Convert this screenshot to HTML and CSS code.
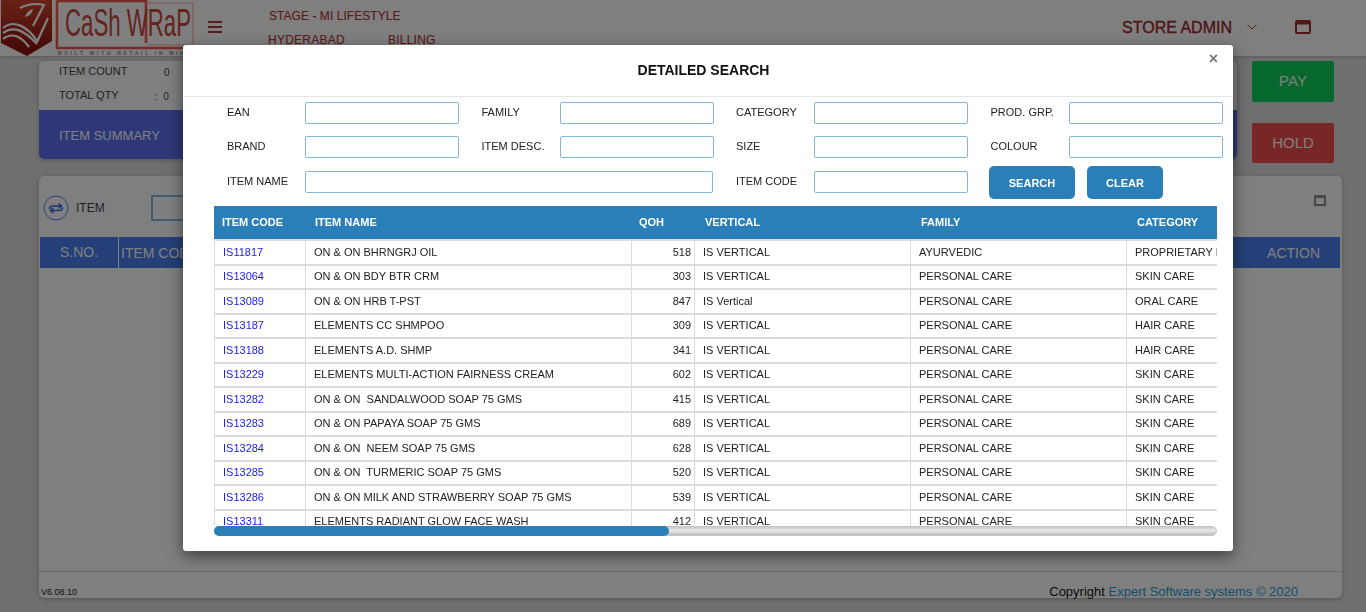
FILE: index.html
```html
<!DOCTYPE html>
<html lang="en">
<head>
<meta charset="utf-8">
<title>Cash Wrap - Billing</title>
<link rel="stylesheet" href="styles.css">
</head>
<body>
<div class="app">
  <header class="topbar">
    <svg class="logo" width="200" height="56" viewBox="0 0 200 56" aria-label="Cash Wrap">
      <defs>
        <linearGradient id="shield" x1="0" y1="0" x2="0" y2="1">
          <stop offset="0" stop-color="#d0452a"/>
          <stop offset="1" stop-color="#860e0c"/>
        </linearGradient>
      </defs>
      <path d="M1 0H52V41L27 56L1 43Z" fill="url(#shield)"/>
      <path d="M3 28C14 19 27 26 38 42M3 33C14 25 25 31 37 44M3 39C12 32 21 36 29 47" fill="none" stroke="#fff" stroke-width="2.200"/>
      <path d="M20 8C28 4 36 3 44 5L33 26M48 18L37 42" fill="none" stroke="#fff" stroke-width="2.200"/>
      <path d="M25 17C26 13 29 10 33 9C32 13 30 16 25 17Z" fill="#fff"/>
      <path d="M56.500 1H146V15M146 11V43M57 1V48H186" fill="none" stroke="#f0584a" stroke-width="2.600"/>
      <path d="M146 3H193V45H147" fill="none" stroke="#f4a8a0" stroke-width="1"/>
      <text class="logo-name" x="65" y="36" textLength="126" lengthAdjust="spacingAndGlyphs">CaSh WRaP</text>
      <text class="logo-tag" x="58" y="55" textLength="132" lengthAdjust="spacing">BUILT WITH RETAIL IN MIND</text>
    </svg>
    <svg class="burger" width="14" height="12" viewBox="0 0 14 12"><path d="M0 1H14M0 6H14M0 11H14" stroke="#b03838" stroke-width="1.800"/></svg>
    <div class="store">
      <div class="store-name">STAGE - MI LIFESTYLE</div>
      <div class="store-sub"><span>HYDERABAD</span><span>BILLING</span></div>
    </div>
    <div class="user">
      <span class="user-name">STORE ADMIN</span>
      <svg class="chev" width="10" height="6" viewBox="0 0 10 6"><path d="M.5 .5L5 5L9.500 .5" fill="none" stroke="#a84038" stroke-width="1"/></svg>
      <svg class="win" width="16" height="14" viewBox="0 0 16 14"><rect x="1" y="1" width="14" height="12" rx="1" fill="none" stroke="#a82c28" stroke-width="2"/><rect x="1" y="1" width="14" height="3.500" fill="#a82c28"/></svg>
    </div>
  </header>

  <main class="content">
    <div class="summary-row">
      <section class="summary-card">
        <div class="stats">
          <div class="stat"><span class="stat-label">ITEM COUNT</span><span class="stat-val">0</span></div>
          <div class="stat"><span class="stat-label">TOTAL QTY</span><span class="stat-val">:&nbsp;&nbsp;0</span></div>
        </div>
        <div class="summary-band">ITEM SUMMARY</div>
      </section>
      <div class="actions">
        <button class="action pay">PAY</button>
        <button class="action hold">HOLD</button>
      </div>
    </div>

    <section class="bill-card">
      <div class="bill-tools">
        <svg class="swap" width="26" height="26" viewBox="0 0 26 26"><circle cx="13" cy="13" r="12" fill="none" stroke="#5080e8" stroke-width="1"/><path d="M6.500 14C6.500 11.500 8 11 10 11H18M15.500 8.500L18.500 11L15.500 13.500M19.500 12.500C19.500 15 18 15.500 16 15.500H8M10.500 13L7.500 15.500L10.500 18" fill="none" stroke="#3a6ae8" stroke-width="1.600"/></svg>
        <span class="bill-label">ITEM</span>
        <input class="bill-input" type="text">
        <svg class="bill-win" width="12" height="11" viewBox="0 0 12 11"><rect x="1" y="1" width="10" height="9" fill="#fff" stroke="#909090" stroke-width="2"/><rect x="0" y="0" width="12" height="3" fill="#909090"/></svg>
      </div>
      <div class="bill-head"><span class="h-sno">S.NO.</span><span class="h-code">ITEM CODE</span><span class="h-action">ACTION</span></div>
      <div class="bill-body"></div>
      <footer class="bill-foot"><span class="version">V6.08.10</span><span class="copy">Copyright <span class="copy-link">Expert Software systems © 2020</span></span></footer>
    </section>
  </main>
</div>

<div class="backdrop"></div>

<div class="modal">
  <div class="modal-head">
    <h4 class="modal-title">DETAILED SEARCH</h4>
    <span class="modal-close">×</span>
  </div>
  <form class="search">
    <div class="frow">
      <label class="field"><span>EAN</span><input type="text"></label>
      <label class="field"><span>FAMILY</span><input type="text"></label>
      <label class="field"><span>CATEGORY</span><input type="text"></label>
      <label class="field"><span>PROD. GRP.</span><input type="text"></label>
    </div>
    <div class="frow">
      <label class="field"><span>BRAND</span><input type="text"></label>
      <label class="field"><span>ITEM DESC.</span><input type="text"></label>
      <label class="field"><span>SIZE</span><input type="text"></label>
      <label class="field"><span>COLOUR</span><input type="text"></label>
    </div>
    <div class="frow frow-last">
      <label class="field field-wide"><span>ITEM NAME</span><input type="text"></label>
      <label class="field"><span>ITEM CODE</span><input type="text"></label>
      <div class="btns"><button type="button" class="btn btn-search">SEARCH</button><button type="button" class="btn btn-clear">CLEAR</button></div>
    </div>
  </form>
  <div class="grid-wrap">
    <div class="grid-scroll">
      <table class="grid">
        <colgroup><col class="c1"><col class="c2"><col class="c3"><col class="c4"><col class="c5"><col class="c6"></colgroup>
        <thead><tr><th>ITEM CODE</th><th class="th-name">ITEM NAME</th><th class="th-qoh">QOH</th><th>VERTICAL</th><th>FAMILY</th><th>CATEGORY</th></tr></thead>
        <tbody>
          <tr><td><a>IS11817</a></td><td>ON &amp; ON BHRNGRJ OIL</td><td class="n">518</td><td>IS VERTICAL</td><td>AYURVEDIC</td><td>PROPRIETARY MEDICINE</td></tr>
          <tr><td><a>IS13064</a></td><td>ON &amp; ON BDY BTR CRM</td><td class="n">303</td><td>IS VERTICAL</td><td>PERSONAL CARE</td><td>SKIN CARE</td></tr>
          <tr><td><a>IS13089</a></td><td>ON &amp; ON HRB T-PST</td><td class="n">847</td><td>IS Vertical</td><td>PERSONAL CARE</td><td>ORAL CARE</td></tr>
          <tr><td><a>IS13187</a></td><td>ELEMENTS CC SHMPOO</td><td class="n">309</td><td>IS VERTICAL</td><td>PERSONAL CARE</td><td>HAIR CARE</td></tr>
          <tr><td><a>IS13188</a></td><td>ELEMENTS A.D. SHMP</td><td class="n">341</td><td>IS VERTICAL</td><td>PERSONAL CARE</td><td>HAIR CARE</td></tr>
          <tr><td><a>IS13229</a></td><td>ELEMENTS MULTI-ACTION FAIRNESS CREAM</td><td class="n">602</td><td>IS VERTICAL</td><td>PERSONAL CARE</td><td>SKIN CARE</td></tr>
          <tr><td><a>IS13282</a></td><td>ON &amp; ON  SANDALWOOD SOAP 75 GMS</td><td class="n">415</td><td>IS VERTICAL</td><td>PERSONAL CARE</td><td>SKIN CARE</td></tr>
          <tr><td><a>IS13283</a></td><td>ON &amp; ON PAPAYA SOAP 75 GMS</td><td class="n">689</td><td>IS VERTICAL</td><td>PERSONAL CARE</td><td>SKIN CARE</td></tr>
          <tr><td><a>IS13284</a></td><td>ON &amp; ON  NEEM SOAP 75 GMS</td><td class="n">628</td><td>IS VERTICAL</td><td>PERSONAL CARE</td><td>SKIN CARE</td></tr>
          <tr><td><a>IS13285</a></td><td>ON &amp; ON  TURMERIC SOAP 75 GMS</td><td class="n">520</td><td>IS VERTICAL</td><td>PERSONAL CARE</td><td>SKIN CARE</td></tr>
          <tr><td><a>IS13286</a></td><td>ON &amp; ON MILK AND STRAWBERRY SOAP 75 GMS</td><td class="n">539</td><td>IS VERTICAL</td><td>PERSONAL CARE</td><td>SKIN CARE</td></tr>
          <tr><td><a>IS13311</a></td><td>ELEMENTS RADIANT GLOW FACE WASH</td><td class="n">412</td><td>IS VERTICAL</td><td>PERSONAL CARE</td><td>SKIN CARE</td></tr>
        </tbody>
      </table>
    </div>
    <div class="hbar"><div class="hthumb"></div></div>
  </div>
</div>
</body>
</html>
```
FILE: styles.css
```css
* { box-sizing: border-box; }
html, body { margin: 0; height: 612px; overflow: hidden; }
body { background: #dedede; font-family: "Liberation Sans", Arial, sans-serif; color: #222; }

.app { height: 612px; display: flex; flex-direction: column; }

.topbar { height: 56px; flex: none; background: #fff; display: flex; align-items: flex-start; box-shadow: 0 1px 3px rgba(0,0,0,.2); }
.logo { flex: none; display: block; }
.logo-name { font-family: "Liberation Sans", sans-serif; font-size: 38px; fill: #c8483c; }
.logo-tag { font-family: "Liberation Sans", sans-serif; font-size: 5px; font-weight: bold; fill: #888; }
.burger { flex: none; margin: 21px 0 0 8px; }
.store { margin-left: 47px; width: 200px; padding-top: 9px; color: #b83838; font-size: 12px; -webkit-text-stroke: .15px #b83838; }
.store-name { line-height: 15px; letter-spacing: .05px; }
.store-sub { display: flex; gap: 43px; margin: 9px 0 0 -1px; line-height: 15px; letter-spacing: .25px; }
.user { margin-left: auto; display: flex; align-items: center; padding: 20px 55px 0 0; height: 34px; }
.user-name { font-size: 16px; color: #a02c2c; -webkit-text-stroke: .4px #a02c2c; padding-top: 2px; }
.chev { margin-left: 15px; }
.win { margin-left: 38px; }

.content { flex: 1; padding: 5px 24px 14px 39px; display: flex; flex-direction: column; }

.summary-row { display: flex; height: 102px; margin-right: 8px; }
.summary-card { width: 1198px; height: 98px; background: #fff; border-radius: 5px; overflow: hidden; display: flex; flex-direction: column; box-shadow: 0 1px 4px rgba(0,0,0,.25); }
.stats { height: 49px; flex: none; padding: 0 0 0 20px; font-size: 11px; color: #444; }
.stat { display: flex; height: 24px; align-items: center; }
.stat:first-child { margin-top: -2px; }
.stat-label { width: 105px; }
.stat-val { width: 40px; font-size: 10px; padding-top: 2px; }
.stat:last-child .stat-val { margin-left: -9px; }
.summary-band { flex: 1; background: #5c70f0; color: #fff; font-size: 13px; padding: 18px 0 0 20px; }

.actions { margin-left: 15px; width: 82px; display: flex; flex-direction: column; gap: 21px; }
.action { border: 0; border-radius: 2px; color: #fff; font: 15px "Liberation Sans", sans-serif; padding: 0 0 2px; }
.pay { height: 41px; background: #0ed05c; }
.hold { height: 40px; background: #f24c4c; }

.bill-card { margin-top: 13px; flex: 1; background: #fff; border-radius: 5px; display: flex; flex-direction: column; box-shadow: 0 1px 4px rgba(0,0,0,.25); position: relative; }
.bill-tools { height: 61px; flex: none; display: flex; align-items: center; padding: 2px 16px 0 4px; }
.swap { flex: none; }
.bill-label { margin-left: 7px; font-size: 12px; color: #444; width: 75px; }
.bill-input { width: 300px; height: 26px; border: 2px solid #88b4dc; background: #fff; }
.bill-win { margin: -15px 0 0 auto; }
.bill-head { height: 31px; flex: none; margin: 0 2px 0 1px; background: #4a80f0; color: #fff; font-size: 14px; display: flex; align-items: center; }
.h-sno { width: 79px; padding-left: 20px; border-right: 1px solid #fff; line-height: 31px; }
.h-code { padding-left: 2px; }
.h-action { margin-left: auto; padding-right: 20px; }
.bill-body { flex: 1; }
.bill-foot { height: 27px; flex: none; border-top: 1px solid #ddd; display: flex; justify-content: space-between; padding: 12px 44px 0 2px; align-items: center; }
.version { font-size: 9px; padding-top: 2px; }
.copy { font-size: 13px; color: #111; }
.copy-link { color: #28a0d8; }

.backdrop { position: fixed; inset: 0; background: rgba(0,0,0,.5); }

.modal { position: absolute; left: 183px; top: 45px; width: 1050px; height: 506px; background: #fff; border-radius: 3px; box-shadow: 0 5px 15px rgba(0,0,0,.5); }
.modal-head { height: 52px; border-bottom: 1px solid #e5e5e5; position: relative; text-align: center; padding-right: 9px; }
.modal-title { margin: 0; font-size: 14px; font-weight: bold; color: #111; line-height: 50px; }
.modal-close { position: absolute; top: 5px; right: 15px; font-size: 16px; line-height: 18px; font-weight: bold; color: #777; }

.search { padding: 5px 0 0 44px; font-size: 11px; color: #222; }
.frow { display: flex; height: 22px; margin-bottom: 12px; }
.frow-last { height: 33px; margin: -5px 0 8px; align-items: center; }
.field { width: 254.500px; flex: none; display: flex; align-items: center; }
.field span { width: 78px; flex: none; padding-bottom: 2px; }
.field input { width: 154px; height: 22px; border: 1px solid #84b6da; border-radius: 2px; background: #fff; padding: 0 4px; }
.field-wide { width: 509px; }
.field-wide input { width: 408px; }
.btns { display: flex; gap: 12px; margin: 2px 0 0 -1.500px; }
.btn { height: 33px; border: 0; border-radius: 5px; background: #2a7fb8; color: #fff; font: bold 11px "Liberation Sans", sans-serif; padding: 0; }
.btn-search { width: 86px; }
.btn-clear { width: 76px; }

.grid-wrap { margin-left: 31px; width: 1003px; }
.grid-scroll { height: 320px; overflow: hidden; }
.grid { border-collapse: separate; border-spacing: 0; table-layout: fixed; width: 1126px; font-size: 11px; }
.c1 { width: 92px; } .c2 { width: 326px; } .c3 { width: 63px; } .c4 { width: 216px; } .c5 { width: 216px; } .c6 { width: 213px; }
.grid th { height: 35px; background: #2a7fb8; color: #fff; text-align: left; font-weight: bold; padding: 0 0 2px 10px; border-bottom: 2px solid #dcdcdc; white-space: pre; }
.grid th:first-child { padding-left: 8px; }
.grid th.th-name { padding-left: 9px; }
.grid th.th-qoh { padding-left: 7px; }
.grid td { height: 25px; padding: 0 0 2px 8px; border-bottom: 2px solid #dcdcdc; border-right: 1px solid #dcdcdc; white-space: pre; color: #222; overflow: hidden; }
.grid tr:nth-child(even) td { height: 24px; }
.grid td:first-child { border-left: 1px solid #dcdcdc; }
.grid td a { color: #1a1aee; }
.grid td.n { text-align: right; padding: 0 3px 2px 0; }
.hbar { height: 10px; position: relative; background: linear-gradient(#c8cacc, #e6e8ea 45%, #bcbec2); border: 1px solid #c4c4c4; border-radius: 5px; }
.hthumb { position: absolute; left: -1px; top: -1px; width: 455px; height: 10px; background: #2a7fb8; border-radius: 5px; }
```
